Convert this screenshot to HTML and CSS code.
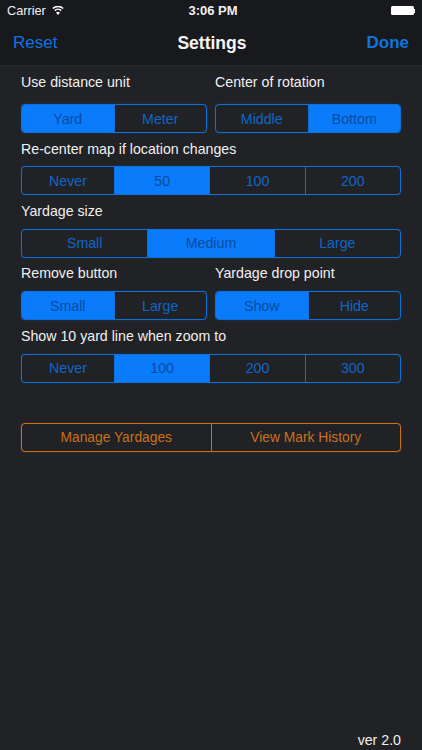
FILE: index.html
```html
<!DOCTYPE html>
<html lang="en">
<head>
<meta charset="utf-8">
<title>Settings</title>
<link rel="stylesheet" href="styles.css">
</head>
<body>
<div class="app">
  <header class="top">
    <div class="status">
      <div class="status-left">
        <span>Carrier</span>
        <svg class="wifi" width="12" height="9" viewBox="0 0 12 9"><path d="M6 9 4 6.6a2.9 2.9 0 0 1 4 0z" fill="#fff"/><path d="M2.8 4.6a4.6 4.6 0 0 1 6.4 0M.9 2.5a7.3 7.3 0 0 1 10.2 0" fill="none" stroke="#fff" stroke-width="1.5"/></svg>
      </div>
      <div class="status-time">3:06 PM</div>
      <div class="status-right">
        <span class="battery"></span><span class="battery-tip"></span>
      </div>
    </div>
    <nav class="nav">
      <span class="nav-btn">Reset</span>
      <span class="nav-title">Settings</span>
      <span class="nav-btn nav-done">Done</span>
    </nav>
  </header>
  <main class="content">
    <div class="pair first">
      <section class="field">
        <div class="label">Use distance unit</div>
        <div class="seg"><span class="on">Yard</span><span>Meter</span></div>
      </section>
      <section class="field">
        <div class="label">Center of rotation</div>
        <div class="seg"><span>Middle</span><span class="on">Bottom</span></div>
      </section>
    </div>
    <section class="field second">
      <div class="label">Re-center map if location changes</div>
      <div class="seg four"><span>Never</span><span class="on">50</span><span>100</span><span>200</span></div>
    </section>
    <section class="field">
      <div class="label">Yardage size</div>
      <div class="seg"><span>Small</span><span class="on">Medium</span><span>Large</span></div>
    </section>
    <div class="pair">
      <section class="field">
        <div class="label">Remove button</div>
        <div class="seg"><span class="on">Small</span><span>Large</span></div>
      </section>
      <section class="field">
        <div class="label">Yardage drop point</div>
        <div class="seg"><span class="on">Show</span><span>Hide</span></div>
      </section>
    </div>
    <section class="field">
      <div class="label">Show 10 yard line when zoom to</div>
      <div class="seg four"><span>Never</span><span class="on">100</span><span>200</span><span>300</span></div>
    </section>
    <div class="seg orange"><span>Manage Yardages</span><span>View Mark History</span></div>
  </main>
  <footer class="version">ver 2.0</footer>
</div>
</body>
</html>
```
FILE: styles.css
```css
* { box-sizing: border-box; }
html, body { margin: 0; height: 100%; }
body { background: #212226; color: #f2f2f2; font-family: "Liberation Sans", Arial, sans-serif; overflow: hidden; }
.app { height: 750px; display: flex; flex-direction: column; }
.top { height: 66px; background: #18191c; border-bottom: 1px solid #2a2b2f; flex: none; }
.status { height: 21px; padding: 0 7px; display: grid; grid-template-columns: 1fr auto 1fr; align-items: center; font-size: 12.7px; color: #f0f0f0; }
.status-left { display: flex; align-items: center; gap: 6px; }
.status-time { font-weight: 700; font-size: 13px; margin-left: 4px; }
.status-right { display: flex; align-items: center; justify-content: flex-end; }
.battery { width: 23px; height: 9px; background: #fff; border-radius: 1.5px; }
.battery-tip { width: 1.5px; height: 4px; background: #fff; }
.nav { height: 44px; padding: 0 13px; display: flex; align-items: center; justify-content: space-between; }
.nav-btn { font-size: 17px; color: #0f74e0; }
.nav-done { font-weight: 700; }
.nav-title { font-size: 17.5px; font-weight: 700; color: #f5f5f5; }
.content { padding: 8px 21px 0; display: flex; flex-direction: column; gap: 7.5px; flex: 1; }
.pair { display: grid; grid-template-columns: 186px 186px; gap: 8px; }
.label { font-size: 14.2px; line-height: 17px; color: #f0f0f0; }
.field .label { margin-bottom: 9px; }
.first .field .label { margin-bottom: 13px; }
.field.second .label { margin-bottom: 8.5px; }
.seg { height: 29px; display: flex; border: 1px solid #0f6fd8; border-radius: 4px; box-shadow: 0 0 1px #0f6fd8; overflow: hidden; font-size: 14.2px; color: #0f66c8; }
.seg span { flex: 1 1 0; display: flex; align-items: center; justify-content: center; border-right: 1px solid #0f6fd8; }
.seg span:last-child { border-right: 0; }
.seg.four span:first-child { flex: 0 0 93px; }
.seg .on { background: #0a7bfb; color: #074c9e; }
.orange { margin-top: 33px; border-color: #c8701a; box-shadow: 0 0 1px #c8701a; color: #c8701a; font-size: 13.8px; }
.orange span { border-right-color: #c8701a; }
.version { flex: none; height: 20px; padding-right: 21px; text-align: right; font-size: 14.2px; line-height: 20px; color: #f0f0f0; }
```
